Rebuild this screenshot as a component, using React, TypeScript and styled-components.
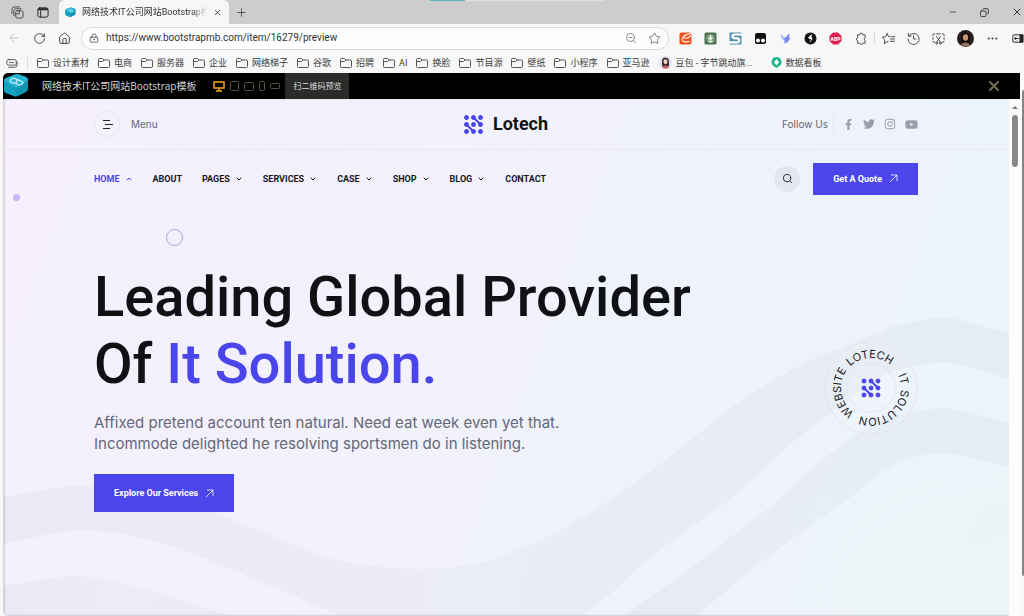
import React from "react";
import styled, { createGlobalStyle } from "styled-components";
import {
  ArrowLeft, ChevronDown, ChevronUp, Ellipsis, House, LockKeyhole, Minus, Plus,
  RotateCw, Search, Star, X, ZoomOut,
} from "lucide-react";
import { FaFacebookF, FaInstagram, FaTwitter, FaYoutube } from "react-icons/fa";

const cjk = '"Noto Sans CJK SC", sans-serif';
const uiFont = `"Open Sans", ${cjk}`;
const compactFont = `Roboto, ${cjk}`;
const headFont = "Roboto, sans-serif";
const bodyFont = "Inter, sans-serif";
const violet = "#4a46ec";

const GlobalStyle = createGlobalStyle`
  * { box-sizing: border-box; }
  html, body { margin: 0; background: #f7f7f7; }
  body { font-family: ${uiFont}; color: #333; }
  button { border: 0; padding: 0; background: none; color: inherit; font: inherit; }
  a { color: inherit; text-decoration: none; }
  svg { display: block; flex: none; }
`;

const Page = styled.div`
  display: flex;
  flex-direction: column;
  min-height: 100vh;
`;

/* ---------- browser chrome ---------- */

const TabStrip = styled.div`
  position: relative;
  display: flex;
  align-items: center;
  height: 24px;
  background: #cdcdcd;
`;

const ProgressLine = styled.div`
  position: absolute;
  top: 0;
  left: 42%;
  width: 17%;
  height: 1px;
  background: linear-gradient(90deg, #5fb5b5 20%, #dedede 20%);
`;

const StripTools = styled.div`
  display: flex;
  gap: 12px;
  width: 59px;
  padding-left: 11px;
`;

const IconButton = styled.button<{ $tone?: string }>`
  display: grid;
  place-items: center;
  color: ${(p) => p.$tone || "#444"};
`;

const Tab = styled.div`
  display: flex;
  align-items: center;
  gap: 6px;
  align-self: stretch;
  width: 170px;
  padding: 0 7px 0 6px;
  border-radius: 6px 6px 0 0;
  background: #f7f7f7;
`;

const TabTitle = styled.span`
  flex: 1;
  overflow: hidden;
  white-space: nowrap;
  font: 9px/14px ${compactFont};
  mask-image: linear-gradient(90deg, #000 88%, transparent);
`;

const NewTab = styled(IconButton)`
  margin-left: 6px;
`;

const WindowControls = styled.div`
  display: flex;
  align-items: center;
  gap: 21px;
  margin-left: auto;
  padding-right: 1px;
`;

const Toolbar = styled.div`
  display: flex;
  align-items: center;
  gap: 12px;
  height: 28px;
  padding-left: 7px;
  overflow: hidden;
`;

const AddressBar = styled.form`
  display: flex;
  flex: 1;
  align-items: center;
  gap: 7px;
  height: 23px;
  margin-left: -2px;
  padding: 0 7px;
  border: 1px solid #dadada;
  border-radius: 12px;
  background: #fefefe;
`;

const AddressInput = styled.input`
  flex: 1;
  min-width: 0;
  padding: 0;
  border: 0;
  outline: 0;
  background: none;
  color: #333;
  font: 10px/16px ${compactFont};
`;

const AddressActions = styled.div`
  display: flex;
  align-items: center;
  gap: 11px;
`;

const Extensions = styled.div`
  display: flex;
  align-items: center;
  gap: 12px;
  margin-left: -2px;
`;

const Divider = styled.span`
  width: 1px;
  height: 12px;
  margin: 0 -5px;
  background: #dcdcdc;
`;

const Bookmarks = styled.nav`
  display: flex;
  align-items: center;
  gap: 9px;
  height: 21px;
  padding-left: 6px;
  white-space: nowrap;
  overflow: hidden;
`;

const BookmarkDivider = styled.span`
  width: 1px;
  height: 12px;
  background: #dcdcdc;
`;

const Bookmark = styled.a`
  display: flex;
  align-items: center;
  gap: 4px;
  color: #3c3c3c;
  font: 9px/14px ${compactFont};
`;

/* ---------- preview frame ---------- */

const Viewport = styled.div`
  display: flex;
  flex: 1;
  padding-left: 3px;
`;

const Frame = styled.div`
  display: flex;
  flex: 1;
  flex-direction: column;
  min-width: 0;
  border-radius: 5px 0 0 5px;
  overflow: hidden;
`;

const PreviewBar = styled.header`
  display: flex;
  align-items: center;
  height: 26px;
  background: #000;
  color: #d4d4d4;
`;

const PreviewTitle = styled.h2`
  margin: 0 17px 0 13px;
  font: 400 10px/16px ${uiFont};
  white-space: nowrap;
`;

const Devices = styled.div`
  display: flex;
  align-items: center;
  gap: 5px;
`;

const ScanButton = styled.button`
  align-self: stretch;
  margin-left: 5px;
  padding: 0 8px;
  background: #2b2b2b;
  color: #ddd;
  font-size: 8px;
  line-height: 14px;
`;

const CloseButton = styled(IconButton)`
  margin: 0 18px 0 auto;
`;

const PageArea = styled.div`
  display: flex;
  flex: 1;
`;

const ScrollTrack = styled.div`
  display: flex;
  flex-direction: column;
  align-items: center;
  gap: 6px;
  width: 11px;
  padding-top: 7px;
  background: #fcfcfc;
`;

const ScrollArrow = styled.span`
  border: 3px solid transparent;
  border-top: 0;
  border-bottom: 3px solid #777;
`;

const ScrollThumb = styled.span`
  width: 6px;
  height: 52px;
  border-radius: 3px;
  background: #888;
`;

const OuterScroll = styled.div`
  width: 4px;
  padding: 17px 0 40px 2px;
  background: #fafafa;
`;

const OuterThumb = styled.div`
  height: 100%;
  border-radius: 3px 0 0 3px;
  background: #858585;
`;

/* ---------- web page ---------- */

const Site = styled.div`
  position: relative;
  flex: 1;
  min-width: 0;
  overflow: hidden;
  border-bottom: 1px solid #d4d4dc;
  box-shadow: inset 2px 0 2px #d8d3e0;
  background:
    radial-gradient(ellipse 30% 40% at 102% 100%, #eaf5f4 0%, #eaf5f400 100%),
    linear-gradient(110deg, #f8f0fe 0%, #f4f0fd 12%, #f2f1fc 40%, #eff2fb 62%, #edf3fb 82%, #ebf4fa 100%);
`;

const WaveArt = styled.svg`
  position: absolute;
  inset: 0;
  width: 100%;
  height: 100%;
`;

const Bubble = styled.span<{ $x: number; $y: number; $size: number; $solid?: boolean }>`
  position: absolute;
  left: ${(p) => p.$x}px;
  top: ${(p) => p.$y}px;
  width: ${(p) => p.$size}px;
  height: ${(p) => p.$size}px;
  border: ${(p) => (p.$solid ? "0" : "1px solid #a9a2dc")};
  border-radius: 50%;
  background: ${(p) => (p.$solid ? "#c3b8fa" : "none")};
`;

const Band = styled.div<{ $line?: boolean }>`
  position: relative;
  border-bottom: ${(p) => (p.$line ? "1px solid #e8e7f2" : "0")};
`;

const Container = styled.div`
  display: flex;
  align-items: center;
  max-width: 824px;
  margin: 0 auto;
`;

const TopRow = styled(Container)`
  display: grid;
  grid-template-columns: 1fr auto 1fr;
  height: 50px;
  color: #646878;
  font: 10px/16px ${bodyFont};
`;

const MenuButton = styled.button`
  display: flex;
  align-items: center;
  gap: 11px;
`;

const MenuCircle = styled.span`
  display: grid;
  place-items: center;
  width: 26px;
  height: 26px;
  border: 1px solid #e9e6f4;
  border-radius: 50%;
`;

const Brand = styled.a`
  display: flex;
  align-items: center;
  gap: 10px;
  color: #0f1115;
  font: 700 18px/24px ${headFont};
`;

const Social = styled.div`
  display: flex;
  align-items: center;
  justify-content: flex-end;
  gap: 9px;
`;

const SocialLabel = styled.span`
  padding-right: 5px;
  border-right: 1px solid #e2e4ee;
`;

const SocialLink = styled.a`
  color: #9a9eac;
`;

const NavRow = styled(Container)`
  height: 57px;
`;

const Menu = styled.nav`
  display: flex;
  gap: 20px;
  margin-right: auto;
  font: 700 9px/14px ${headFont};
`;

const MenuLink = styled.a<{ $active?: boolean }>`
  display: flex;
  align-items: center;
  gap: 5px;
  color: ${(p) => (p.$active ? violet : "#17181d")};
`;

const SearchButton = styled.button`
  display: grid;
  place-items: center;
  width: 26px;
  height: 26px;
  margin-right: 13px;
  border-radius: 50%;
  background: #e5e7f0;
  color: #222;
`;

const Action = styled.a<{ $tall?: boolean }>`
  display: inline-flex;
  align-items: center;
  gap: 7px;
  height: ${(p) => (p.$tall ? 38 : 32)}px;
  padding: 0 20px;
  background: ${violet};
  color: #fff;
  font: 700 9px/14px ${headFont};
  white-space: nowrap;
`;

const Hero = styled(Container)`
  position: relative;
  justify-content: space-between;
  padding-top: 57px;
`;

const Headline = styled.h1`
  margin: 0 0 14px;
  color: #0f1115;
  font: 500 56px/67px ${headFont};
`;

const Accent = styled.span`
  color: ${violet};
`;

const Lead = styled.p`
  margin: 0 0 20px;
  color: #646878;
  font: 15px/21px ${bodyFont};
`;

const Seal = styled.svg`
  flex: none;
`;

/* ---------- drawings ---------- */

type Point = [number, number];

const smooth = (pts: Point[], start = "M") =>
  pts
    .map((p, i) => {
      if (i === 0) return `${start}${p[0]} ${p[1]}`;
      const a = pts[i - 2] || pts[i - 1];
      const b = pts[i - 1];
      const d = pts[i + 1] || p;
      return `C${b[0] + (p[0] - a[0]) / 6} ${b[1] + (p[1] - a[1]) / 6} ${p[0] - (d[0] - b[0]) / 6} ${p[1] - (d[1] - b[1]) / 6} ${p[0]} ${p[1]}`;
    })
    .join("");

const crest: Point[] = [[0, 400], [76, 388], [140, 394], [211, 415], [277, 442], [335, 463], [394, 471], [450, 470], [499, 459], [577, 422], [663, 362], [733, 306], [796, 268], [863, 240], [896, 227], [946, 220], [1006, 236]];
const upperUnder: Point[] = [[1006, 281], [946, 265], [896, 272], [863, 289], [793, 342], [729, 400], [649, 459], [577, 518], [460, 560], [336, 518], [286, 497], [196, 459], [140, 441], [76, 433], [0, 447]];
const lowerRight: Point[] = [[623, 518], [695, 465], [767, 409], [810, 370], [856, 335], [896, 317], [946, 311], [1006, 326]];
const lowerRightUnder: Point[] = [[1006, 370], [946, 356], [896, 365], [845, 402], [766, 459], [695, 518]];
const lowerLeft: Point[] = [[0, 489], [74, 479], [140, 492], [224, 518]];

const Waves = () => (
  <WaveArt viewBox="0 0 1006 518" preserveAspectRatio="none" aria-hidden="true">
    <defs>
      <linearGradient id="mist" x1="0" x2="1">
        <stop offset="0" stopColor="#8c8098" stopOpacity="0.07" />
        <stop offset="0.5" stopColor="#7c8698" stopOpacity="0.05" />
        <stop offset="1" stopColor="#808c98" stopOpacity="0.07" />
      </linearGradient>
    </defs>
    <g fill="url(#mist)">
      <path d={`${smooth(crest)}${smooth(upperUnder, "L")}Z`} />
      <path d={`${smooth(lowerRight)}${smooth(lowerRightUnder, "L")}Z`} />
      <path d={`${smooth(lowerLeft)}L0 518Z`} />
    </g>
  </WaveArt>
);

const DotMark = () => (
  <g fill={violet} stroke={violet} strokeWidth="2">
    {[2, 9, 16].map((y) => [2, 9, 16].map((x) => <circle key={`${x}-${y}`} cx={x} cy={y} r="2" strokeWidth="1" />))}
    <path d="M9 2l7 7M2 9l7 7" />
  </g>
);

const ArrowUpRightThin = () => (
  <svg width="9" height="9" viewBox="0 0 9 9" fill="none" stroke="currentColor" strokeWidth=".8" aria-hidden="true">
    <path d="M1 8L8 1M2 1h6v6" />
  </svg>
);

const Gem = ({ size }: { size: number }) => (
  <svg width={size} height={size} viewBox="0 0 26 26" aria-hidden="true">
    <path d="M1 8Q1 6 3 5L12 1.500Q14 1 16 1.500L23 4Q25 5 25 7V16Q25 18 23 19L15 23Q13 24 11 23L3 20Q1 19 1 17z" fill="#1094b4" />
    <path d="M1 8Q1 6 3 5L12 1.500Q14 1 16 1.500L23 4Q25 5 25 7L15 14Q13 15 11 14z" fill="#25b4d2" />
    <path d="M1 8l10 6q1.500 1 1.500 3v6.500L3 20Q1 19 1 17z" fill="#14a2c2" />
    <path d="M8 6.500q2-2.500 5-.5l6 2.500q2 1 0 2.500l-2 1q-2 .5-3-1l-1-1.500q-1 1.500-3 .5l-2-1q-1.500-1 0-2.500zM13 9.500l1.500-3" fill="none" stroke="#d5f7fd" strokeWidth="1.200" />
  </svg>
);

const LineIcon = ({ children, size = 13 }: { children: React.ReactNode; size?: number }) => (
  <svg width={size} height={size} viewBox="0 0 14 14" fill="none" stroke="currentColor" strokeWidth="1" strokeLinecap="round" strokeLinejoin="round" aria-hidden="true">
    {children}
  </svg>
);

const FolderIcon = () => (
  <svg width="12" height="12" viewBox="0 0 12 12" fill="none" stroke="#555" strokeLinejoin="round" aria-hidden="true">
    <path d="M.5 2.500a1 1 0 0 1 1-1h3l1.500 1.500h4.500a1 1 0 0 1 1 1v5.500a1 1 0 0 1-1 1h-9a1 1 0 0 1-1-1zM.5 4.500h4L6 3" />
  </svg>
);

const Badge = ({ kind }: { kind: string }) => (
  <svg width="13" height="13" viewBox="0 0 13 13" aria-hidden="true">
    {kind === "orange" && (<>
      <rect x=".5" y=".5" width="12" height="12" rx="2" fill="#ee4e1d" />
      <path d="M12.500 1.500C8 2 5 3 3.500 6H9l3-2.500M3 7c0 3 3 3.500 8 2.500" fill="none" stroke="#fff" strokeWidth="1.200" />
    </>)}
    {kind === "download" && (<>
      <rect x=".5" y=".5" width="12" height="12" rx="1.500" fill="#4a7350" />
      <circle cx="6.500" cy="6.500" r="4.500" fill="#7c9c80" />
      <path d="M6.500 3v4M4.500 5.500l2 2 2-2M4.500 9.500h4" fill="none" stroke="#fff" strokeWidth="1.300" />
    </>)}
    {kind === "s" && (<>
      <rect x=".5" y=".5" width="12" height="12" fill="#5692b5" />
      <path d="M13 2.500H6C2.500 2.500 2.500 6 6 6.300h2c3 0 3 4 0 4H0" fill="none" stroke="#fff" strokeWidth="2.200" />
    </>)}
    {kind === "monkey" && (<>
      <rect x="1" y="1" width="11" height="11" rx="2" fill="#111" />
      <circle cx="4" cy="8.500" r="2" fill="#fff" />
      <circle cx="9" cy="8.500" r="2" fill="#fff" />
    </>)}
    {kind === "bird" && (<>
      <path d="M1.500 2.500q3 3 5.500 3 1-3 4-4-1.500 3-1 4 1 .5 2 .5-2 1-2.500 3-2 3-5 2l2-1.500Q3 8 1.500 2.500z" fill="#7b83ee" />
      <path d="M1.500 2.500q3 3 5.500 3L4.500 8Q2 6 1.500 2.500z" fill="#a9c0fb" />
    </>)}
    {kind === "bolt" && (<>
      <circle cx="6.500" cy="6.500" r="6" fill="#111" />
      <path d="M8 2L4 5.500 5.500 7H7l-2 4 3.500-4L7.500 5z" fill="#fff" />
    </>)}
    {kind === "abp" && (<>
      <path d="M4 .5h5L12.500 4v5L9 12.500H4L.5 9V4z" fill="#dc2350" />
      <text x="6.500" y="8.500" textAnchor="middle" fontFamily={headFont} fontWeight="700" fontSize="5" fill="#fff">ABP</text>
    </>)}
  </svg>
);

const Portrait = ({ size, dark }: { size: number; dark?: boolean }) => (
  <svg width={size} height={size} viewBox="0 0 16 16" aria-hidden="true">
    <circle cx="8" cy="8" r="8" fill={dark ? "#2a1f1c" : "#dfe3f0"} />
    <path d="M4 13C3 4 4 2 8 2s5 3 4 11z" fill={dark ? "#120d0c" : "#3a2a2c"} />
    <ellipse cx="8" cy="7" rx="2.500" ry="3" fill={dark ? "#c69678" : "#f3cdbd"} />
    <path d="M4 14c1-3 7-3 8 0-2 2-6 2-8 0z" fill={dark ? "#94705c" : "#c65d5d"} />
  </svg>
);

const devices: [string, number, number][] = [
  ["Tablet", 8, 9], ["Tablet landscape", 9, 8], ["Phone", 5, 9], ["Phone landscape", 9, 5],
];

const folders = ["设计素材", "电商", "服务器", "企业", "网络梯子", "谷歌", "招聘", "AI", "换脸", "节目源", "壁纸", "小程序", "亚马逊"];

const links: [string, boolean][] = [
  ["HOME", true], ["ABOUT", false], ["PAGES", true], ["SERVICES", true], ["CASE", true], ["SHOP", true], ["BLOG", true], ["CONTACT", false],
];

export default function App() {
  return (
    <Page>
      <GlobalStyle />
      <TabStrip>
        <ProgressLine />
        <StripTools>
          <IconButton aria-label="Workspaces">
            <LineIcon>
              <rect x="5" y="5" width="8" height="8" rx="2" />
              <path d="M3 10.500V5.500Q3 3 5.500 3H11M1 8V4Q1 1 4 1h5M5 8.500h4V5" />
            </LineIcon>
          </IconButton>
          <IconButton aria-label="Tab actions" $tone="#222">
            <LineIcon>
              <rect x="2" y="2" width="11" height="10" rx="2" />
              <path d="M3 3.500h9" strokeWidth="2" />
              <path d="M5 5v7" />
            </LineIcon>
          </IconButton>
        </StripTools>
        <Tab>
          <Gem size={11} />
          <TabTitle>网络技术IT公司网站Bootstrap模板</TabTitle>
          <IconButton aria-label="Close tab" $tone="#222"><X size={9} /></IconButton>
        </Tab>
        <NewTab aria-label="New tab"><Plus size={13} strokeWidth={1.5} /></NewTab>
        <WindowControls>
          <IconButton aria-label="Minimize"><Minus size={10} /></IconButton>
          <IconButton aria-label="Restore" $tone="#222">
            <LineIcon size={11}>
              <rect x="2" y="5" width="7" height="7" rx="1" />
              <path d="M5 3q0-1 1-1h4q2 0 2 2v4q0 1-1 1" />
            </LineIcon>
          </IconButton>
          <IconButton aria-label="Close window" $tone="#222"><X size={12} strokeWidth={1.75} /></IconButton>
        </WindowControls>
      </TabStrip>

      <Toolbar>
        <IconButton aria-label="Back" $tone="#bdbdbd"><ArrowLeft size={14} strokeWidth={1.5} /></IconButton>
        <IconButton aria-label="Reload"><RotateCw size={13} strokeWidth={1.75} /></IconButton>
        <IconButton aria-label="Home"><House size={13} strokeWidth={1.75} /></IconButton>
        <AddressBar onSubmit={(e) => e.preventDefault()}>
          <LockKeyhole size={10} strokeWidth={2} color="#555" />
          <AddressInput aria-label="Address" defaultValue="https://www.bootstrapmb.com/item/16279/preview" />
          <AddressActions>
            <IconButton type="button" aria-label="Zoom out" $tone="#777"><ZoomOut size={12} strokeWidth={1.75} /></IconButton>
            <IconButton type="button" aria-label="Favourite" $tone="#777"><Star size={13} strokeWidth={1.75} /></IconButton>
          </AddressActions>
        </AddressBar>
        <Extensions>
          {["orange", "download", "s", "monkey", "bird", "bolt", "abp"].map((kind) => (
            <IconButton key={kind} aria-label={kind}><Badge kind={kind} /></IconButton>
          ))}
          <IconButton aria-label="Extensions">
            <LineIcon>
              <path d="M4 3h2a1.800 1.800 0 0 1 3.600 0H12v3a1.600 1.600 0 0 0 0 3v3H9.500a1.800 1.800 0 0 1-3.500 0H4V9.500a1.800 1.800 0 0 1 0-3.500z" />
            </LineIcon>
          </IconButton>
          <Divider />
          <IconButton aria-label="Favourites">
            <LineIcon><path d="M8.500 5L7 5 5.500 1.500 4 5 .5 5.500l2.500 3L2.500 12.500l4-2.500M10 5h3.500M9 7.500h4.500M9 10h4.500" /></LineIcon>
          </IconButton>
          <IconButton aria-label="History">
            <LineIcon><path d="M1.500 1.500v3h3M1.800 4.500A6 6 0 1 1 1 7.500M7 4v3.500h2.500" /></LineIcon>
          </IconButton>
          <IconButton aria-label="Screenshot">
            <LineIcon>
              <path d="M1 4V3a1 1 0 0 1 1-1h1M5 2h4M11 2h1a1 1 0 0 1 1 1v1M13 6v2M1 6v2M1 10a1 1 0 0 0 1 1h1M13 10a1 1 0 0 1-1 1h-1M5 5l4 6M9 5l-4 6" />
              <circle cx="5" cy="12" r="1" />
              <circle cx="9" cy="12" r="1" />
            </LineIcon>
          </IconButton>
          <IconButton aria-label="Profile"><Portrait size={17} dark /></IconButton>
          <IconButton aria-label="Settings"><Ellipsis size={13} /></IconButton>
          <IconButton aria-label="Sidebar" $tone="#222">
            <LineIcon>
              <path d="M10 3H3a1 1 0 0 0-1 1v6a1 1 0 0 0 1 1h7zM8 7H4M5.500 5.500L4 7l1.500 1.500" />
              <path d="M10 3h3v8h-3z" fill="currentColor" />
            </LineIcon>
          </IconButton>
        </Extensions>
      </Toolbar>

      <Bookmarks aria-label="Bookmarks">
        <IconButton aria-label="Reading list">
          <LineIcon size={12}>
            <rect x="1" y="3" width="11" height="6.500" rx="2" />
            <path d="M4 6.300h5M3 12h7q3 0 3-3V6" />
          </LineIcon>
        </IconButton>
        <BookmarkDivider />
        {folders.map((name) => (
          <Bookmark key={name} href="#"><FolderIcon />{name}</Bookmark>
        ))}
        <Bookmark href="#"><Portrait size={13} />豆包 - 字节跳动旗...</Bookmark>
        <span />
        <Bookmark href="#">
          <svg width="11" height="11" viewBox="0 0 11 11" aria-hidden="true">
            <path d="M5.500 0a5 5 0 0 1 3 9l-3 2-3-2a5 5 0 0 1 3-9z" fill="#18b78c" />
            <path d="M5.500 2L8 5.200 5.500 8.500 3 5.200z" fill="#fff" />
          </svg>
          数据看板
        </Bookmark>
      </Bookmarks>

      <Viewport>
        <Frame>
          <PreviewBar>
            <Gem size={26} />
            <PreviewTitle>网络技术IT公司网站Bootstrap模板</PreviewTitle>
            <Devices>
              <IconButton aria-label="Desktop" $tone="#f0a818">
                <svg width="12" height="11" viewBox="0 0 12 11" fill="none" stroke="currentColor" strokeWidth="1.500">
                  <path d="M1 1h10v6H1zM6 7v3M3 10h6" />
                </svg>
              </IconButton>
              {devices.map(([name, w, h]) => (
                <IconButton key={name} aria-label={name} $tone="#5a5344">
                  <svg width={w + 1} height={h + 1} viewBox={`0 0 ${w + 1} ${h + 1}`} fill="none" stroke="currentColor">
                    <rect x=".5" y=".5" width={w} height={h} rx="1" />
                  </svg>
                </IconButton>
              ))}
            </Devices>
            <ScanButton>扫二维码预览</ScanButton>
            <CloseButton aria-label="Close preview" $tone="#6e6656"><X size={16} strokeWidth={3.5} /></CloseButton>
          </PreviewBar>

          <PageArea>
            <Site>
              <Waves />
              <Band $line>
                <TopRow>
                  <MenuButton>
                    <MenuCircle>
                      <svg width="11" height="9" viewBox="0 0 11 9" stroke="#222" aria-hidden="true">
                        <path d="M1 .5h7M3 4.500h8M1 8.500h7" />
                      </svg>
                    </MenuCircle>
                    Menu
                  </MenuButton>
                  <Brand href="#">
                    <svg width="19" height="19" viewBox="-.5 -.5 19 19" aria-hidden="true"><DotMark /></svg>
                    Lotech
                  </Brand>
                  <Social>
                    <SocialLabel>Follow Us</SocialLabel>
                    <SocialLink href="#" aria-label="Facebook"><FaFacebookF size={11} /></SocialLink>
                    <SocialLink href="#" aria-label="Twitter"><FaTwitter size={12} /></SocialLink>
                    <SocialLink href="#" aria-label="Instagram"><FaInstagram size={12} /></SocialLink>
                    <SocialLink href="#" aria-label="YouTube"><FaYoutube size={13} /></SocialLink>
                  </Social>
                </TopRow>
              </Band>
              <Band>
                <NavRow>
                  <Menu>
                    {links.map(([name, more], i) => (
                      <MenuLink key={name} href="#" $active={i === 0}>
                        {name}
                        {more && (i === 0 ? <ChevronUp size={8} strokeWidth={3} /> : <ChevronDown size={8} strokeWidth={3} />)}
                      </MenuLink>
                    ))}
                  </Menu>
                  <SearchButton aria-label="Search"><Search size={11} /></SearchButton>
                  <Action href="#">Get A Quote <ArrowUpRightThin /></Action>
                </NavRow>
              </Band>
              <Bubble $x={10} $y={95} $size={7} $solid />
              <Bubble $x={163} $y={130} $size={17} />
              <Hero>
                <div>
                  <Headline>Leading Global Provider<br />Of <Accent>It Solution.</Accent></Headline>
                  <Lead>
                    Affixed pretend account ten natural. Need eat week even yet that.<br />
                    Incommode delighted he resolving sportsmen do in listening.
                  </Lead>
                  <Action href="#" $tall>Explore Our Services <ArrowUpRightThin /></Action>
                </div>
                <Seal width="94" height="94" viewBox="0 0 94 94" role="img" aria-label="Lotech IT solution website">
                  <circle cx="47" cy="47" r="46" fill="#fff" fillOpacity="0.08" stroke="#e2e4ef" />
                  <circle cx="47" cy="47" r="24" fill="#fff" fillOpacity="0.12" stroke="#e4e6f1" />
                  <path id="ring" d="M17 47a30 30 0 0 1 60 0a30 30 0 0 1-60 0a30 30 0 0 1 60 0" fill="none" />
                  <g fill="#17181d" fontFamily={bodyFont} fontSize="11">
                    <text textAnchor="middle"><textPath href="#ring" startOffset="46">LOTECH</textPath></text>
                    <text textAnchor="middle"><textPath href="#ring" startOffset="86">IT</textPath></text>
                    <text textAnchor="middle"><textPath href="#ring" startOffset="124">SOLUTION</textPath></text>
                    <text textAnchor="middle"><textPath href="#ring" startOffset="183">WEBSITE</textPath></text>
                  </g>
                  <g transform="translate(38 38)"><DotMark /></g>
                </Seal>
              </Hero>
            </Site>
            <ScrollTrack><ScrollArrow /><ScrollThumb /></ScrollTrack>
          </PageArea>
        </Frame>
        <OuterScroll><OuterThumb /></OuterScroll>
      </Viewport>
    </Page>
  );
}
